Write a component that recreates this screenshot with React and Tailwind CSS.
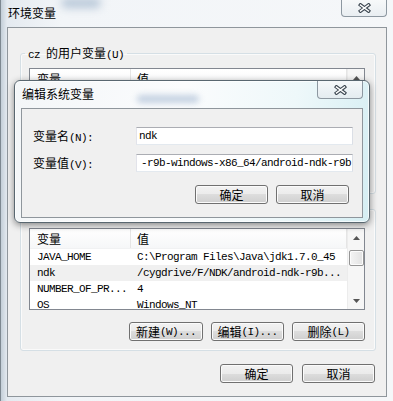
import React from "react";

const CJK_SRC = "[\\u2E80-\\u9FFF\\uFF00-\\uFFEF\\u3000-\\u303F]+";

function Mix({ text }) {
  const out = [];
  const re = new RegExp(CJK_SRC, "g");
  let last = 0;
  let m;
  let i = 0;
  while ((m = re.exec(text)) !== null) {
    if (m.index > last)
      out.push(
        <span key={i++} className="font-['Liberation_Mono',monospace] text-[11px] tracking-[-0.6px] whitespace-pre">
          {text.slice(last, m.index)}
        </span>
      );
    out.push(
      <span key={i++} className="font-['Noto_Sans_CJK_SC',sans-serif] text-[12px] tracking-normal whitespace-pre">
        {m[0]}
      </span>
    );
    last = m.index + m[0].length;
  }
  if (last < text.length)
    out.push(
      <span key={i++} className="font-['Liberation_Mono',monospace] text-[11px] tracking-[-0.6px] whitespace-pre">
        {text.slice(last)}
      </span>
    );
  return <>{out}</>;
}

function CloseX() {
  return (
    <svg width="13" height="10" viewBox="0 0 13 10">
      <path d="M2.5 2 L10.5 8 M10.5 2 L2.5 8" stroke="#3b4650" strokeWidth="3.6" strokeLinecap="square" />
      <path d="M2.5 2 L10.5 8 M10.5 2 L2.5 8" stroke="#ffffff" strokeWidth="1.5" strokeLinecap="square" />
    </svg>
  );
}

function Btn({ label, w = "w-[73px]" }) {
  return (
    <div
      className={
        "flex h-[19px] items-center justify-center rounded-[3px] border border-[#707070] bg-[linear-gradient(#f2f2f2_0%,#ebebeb_50%,#dddddd_50%,#cfcfcf_100%)] shadow-[inset_0_0_0_1px_#fbfbfb] leading-[14px] text-black " +
        w
      }
    >
      <Mix text={label} />
    </div>
  );
}

function Scrollbar() {
  return (
    <div className="flex w-[17px] shrink-0 flex-col items-center bg-[#f6f6f6] border-l border-[#ececec]">
      <div className="flex h-[17px] w-full items-center justify-center">
        <svg width="7" height="4" viewBox="0 0 7 4">
          <polygon points="3.5,0 7,4 0,4" fill="#555" />
        </svg>
      </div>
      <div className="mt-[4px] h-[16px] w-[15px] rounded-[2px] border border-[#959595] bg-[linear-gradient(90deg,#f4f4f4,#e2e2e2)] shadow-[inset_0_0_0_1px_#fcfcfc]" />
      <div className="flex-1" />
      <div className="flex h-[17px] w-full items-center justify-center">
        <svg width="7" height="4" viewBox="0 0 7 4">
          <polygon points="0,0 7,0 3.5,4" fill="#555" />
        </svg>
      </div>
    </div>
  );
}

function VarList({ rows, height }) {
  return (
    <div className={"ml-[8px] flex w-[336px] overflow-hidden border border-[#828790] bg-white leading-[14px] text-black " + height}>
      <div className="flex min-w-0 flex-1 flex-col">
        <div className="flex h-[20px] shrink-0 bg-[linear-gradient(#ffffff,#f6f7f8)] border-b border-[#f1f2f3]">
          <div className="flex w-[101px] items-center border-r border-[#e5e5e5] pl-[7px]">
            <Mix text="变量" />
          </div>
          <div className="flex flex-1 items-center border-r border-[#e5e5e5] pl-[6px]">
            <Mix text="值" />
          </div>
        </div>
        {rows.map(([k, v, hl], i) => (
          <div key={i} className={"flex h-[16px] shrink-0 " + (hl ? "bg-[#f0f0f0]" : "")}>
            <div className="flex w-[101px] items-center pl-[7px]">
              <Mix text={k} />
            </div>
            <div className="flex flex-1 items-center pl-[6px] whitespace-nowrap overflow-hidden">
              <Mix text={v} />
            </div>
          </div>
        ))}
      </div>
      <Scrollbar />
    </div>
  );
}

function Group({ legend, children, className }) {
  return (
    <fieldset className={"ml-[12px] w-[356px] rounded-[3px] border border-[#d5dfe5] shadow-[inset_0_0_0_1px_#fafafa] " + className}>
      <legend className="ml-[4px] px-[3px] leading-[14px] text-black">
        <Mix text={legend} />
      </legend>
      {children}
    </fieldset>
  );
}

export default function App() {
  return (
    <div className="relative h-[401px] w-[393px] overflow-hidden border-l border-[#7d8891] bg-[linear-gradient(90deg,#c3ced8_0px,#e4eaf0_6px,#f2f5f8_60px,#f5f7f9_100%)]">
      {/* blurred desktop bits behind the glass */}
      <div className="absolute left-[60px] top-[-2px] h-[10px] w-[40px] rounded-full bg-[#b7c7d8] blur-[4px]" />

      {/* title bar */}
      <div className="flex h-[27px] items-start justify-between">
        <div className="pl-[7px] pt-[4px] leading-[16px] text-black">
          <Mix text="环境变量" />
        </div>
        <div className="mr-[6px] flex h-[17px] w-[46px] items-center justify-center rounded-b-[4px] border border-t-0 border-[#8d98a1] bg-[linear-gradient(#f7f9fa,#e9eef2)]">
          <CloseX />
        </div>
      </div>

      {/* client area */}
      <div className="ml-[6px] flex h-[370px] w-[380px] flex-col border border-[#8f969c] bg-[#f0f0f0]">
        <Group legend="cz 的用户变量(U)" className="mt-[17px] h-[149px] pt-[6px]">
          <VarList height="h-[86px]" rows={[]} />
        </Group>

        <Group legend="系统变量(S)" className="mt-[7px] h-[150px] pt-[10px]">
          <VarList
            height="h-[82px]"
            rows={[
              ["JAVA_HOME", "C:\\Program Files\\Java\\jdk1.7.0_45"],
              ["ndk", "/cygdrive/F/NDK/android-ndk-r9b...", true],
              ["NUMBER_OF_PR...", "4"],
              ["OS", "Windows_NT"],
            ]}
          />
          <div className="mr-[10px] mt-[12px] flex justify-end gap-[8px]">
            <Btn label="新建(W)..." w="w-[74px]" />
            <Btn label="编辑(I)..." />
            <Btn label="删除(L)" />
          </div>
        </Group>

        <div className="mr-[11px] mt-[13px] flex justify-end gap-[9px]">
          <Btn label="确定" />
          <Btn label="取消" />
        </div>
      </div>

      {/* edit dialog (window on top) */}
      <div className="absolute left-[13px] top-[80px] flex h-[143px] w-[356px] flex-col rounded-[6px] border border-[#596770] bg-[linear-gradient(100deg,#f3f6f8_0%,#fbfcfd_45%,#eef8fa_75%,#d5eef3_100%)] shadow-[0_2px_7px_rgba(0,0,0,0.45),inset_0_0_0_1px_rgba(255,255,255,0.7)]">
        <div className="absolute left-[122px] top-[14px] h-[8px] w-[62px] rounded-full bg-[#9fb4cf] opacity-60 blur-[3px]" />
        <div className="relative flex h-[27px] shrink-0 items-start justify-between">
          <div className="pl-[7px] pt-[4px] leading-[16px] text-black">
            <Mix text="编辑系统变量" />
          </div>
          <div className="mr-[6px] flex h-[18px] w-[46px] items-center justify-center rounded-b-[4px] border border-t-0 border-[#8d98a1] bg-[linear-gradient(#f5f8fa,#e4ecf0)]">
            <CloseX />
          </div>
        </div>
        <div className="relative mx-[6px] flex h-[110px] flex-col border border-[#8f969c] bg-[#f0f0f0] leading-[14px] text-black">
          <div className="mt-[18px] flex items-center">
            <div className="w-[114px] pl-[11px]">
              <Mix text="变量名(N):" />
            </div>
            <div className="flex h-[18px] w-[217px] items-center border border-[#abadb3] border-b-[#e3e9ef] border-l-[#e2e3ea] border-r-[#dbdfe6] bg-white pl-[2px]">
              <Mix text="ndk" />
            </div>
          </div>
          <div className="mt-[9px] flex items-center">
            <div className="w-[114px] pl-[11px]">
              <Mix text="变量值(V):" />
            </div>
            <div className="flex h-[18px] w-[217px] items-center justify-end overflow-hidden border border-[#abadb3] border-b-[#e3e9ef] border-l-[#e2e3ea] border-r-[#dbdfe6] bg-white pr-[1px] whitespace-nowrap">
              <Mix text="-r9b-windows-x86_64/android-ndk-r9b" />
            </div>
          </div>
          <div className="mr-[13px] mt-[13px] flex justify-end gap-[8px]">
            <Btn label="确定" />
            <Btn label="取消" />
          </div>
        </div>
      </div>
    </div>
  );
}
